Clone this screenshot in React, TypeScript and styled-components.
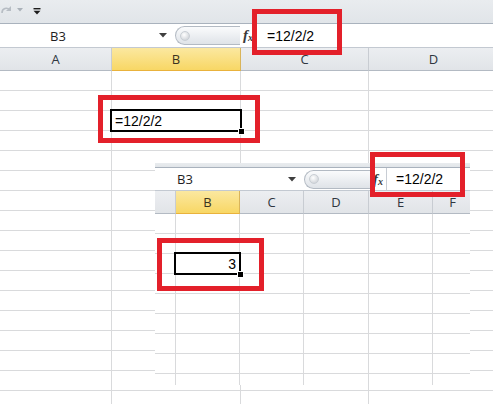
import { FC } from "react";
import styled, { createGlobalStyle } from "styled-components";

interface Column {
  label: string;
  width: number;
  selected?: boolean;
}

interface SheetProps {
  columns: Column[];
  rows: number;
  activeRow: number;
  activeCol: number;
  cellText: string;
  cellAlign: "left" | "right";
  nameText: string;
  nameWidth: number;
  nameIndent: number;
  splitterWidth: number;
  formula: string;
  formulaIndent: number;
  ribbonHeight: number;
  formulaHeight: number;
  quickAccess?: boolean;
}

const GlobalStyle = createGlobalStyle`
  html, body {
    margin: 0;
    padding: 0;
    background: #ffffff;
  }
`;

const QuickAccess: FC = () => (
  <QuickBar>
    <svg width="12" height="12" viewBox="0 0 12 12">
      <path d="M1 9 C1 4 6 3 9 6" fill="none" stroke="#b7bdc4" strokeWidth="1.6" />
      <path d="M10 2 L10 7 L5 7 Z" fill="#b7bdc4" />
    </svg>
    <svg width="6" height="4" viewBox="0 0 6 4">
      <path d="M0 0 L6 0 L3 3.5 Z" fill="#aab1b9" />
    </svg>
    <Spacer />
    <svg width="8" height="7" viewBox="0 0 8 7">
      <rect x="0.5" y="0" width="7" height="1.4" fill="#1c1c1c" />
      <path d="M0.5 2.8 L7.5 2.8 L4 6.5 Z" fill="#1c1c1c" />
    </svg>
  </QuickBar>
);

const Sheet: FC<SheetProps> = (p) => (
  <SheetFrame>
    <Ribbon $height={p.ribbonHeight}>{p.quickAccess && <QuickAccess />}</Ribbon>
    <FormulaRow $height={p.formulaHeight}>
      <NameBox $width={p.nameWidth} $indent={p.nameIndent}>
        <span>{p.nameText}</span>
        <svg width="8" height="5" viewBox="0 0 8 5">
          <path d="M0 0 L8 0 L4 4.5 Z" fill="#3f3f3f" />
        </svg>
      </NameBox>
      <Splitter $width={p.splitterWidth}>
        <Pill>
          <Grip />
        </Pill>
        <Fx>
          f<sub>x</sub>
        </Fx>
      </Splitter>
      <FormulaInput $indent={p.formulaIndent}>{p.formula}</FormulaInput>
    </FormulaRow>
    <HeaderRow>
      {p.columns.map((c, i) => (
        <HeaderCell key={i} $width={c.width} $selected={!!c.selected}>
          {c.label}
        </HeaderCell>
      ))}
    </HeaderRow>
    {Array.from({ length: p.rows }, (_, r) => (
      <Row key={r}>
        {p.columns.map((c, i) => {
          const active = r + 1 === p.activeRow && i === p.activeCol;
          return (
            <Cell key={i} $width={c.width} $active={active} $align={p.cellAlign}>
              {active && (
                <>
                  {p.cellText}
                  <Selection>
                    <FillHandle />
                  </Selection>
                </>
              )}
            </Cell>
          );
        })}
      </Row>
    ))}
  </SheetFrame>
);

export default function App() {
  return (
    <>
      <GlobalStyle />
      <Page>
        <Sheet
          columns={[
            { label: "A", width: 112 },
            { label: "B", width: 129, selected: true },
            { label: "C", width: 128 },
            { label: "D", width: 130 },
          ]}
          rows={17}
          activeRow={3}
          activeCol={1}
          cellText="=12/2/2"
          cellAlign="left"
          nameText="B3"
          nameWidth={173}
          nameIndent={50}
          splitterWidth={83}
          formula="=12/2/2"
          formulaIndent={10}
          ribbonHeight={23}
          formulaHeight={23}
          quickAccess
        />
        <Inset>
          <Sheet
            columns={[
              { label: "", width: 21 },
              { label: "B", width: 64, selected: true },
              { label: "C", width: 64 },
              { label: "D", width: 65 },
              { label: "E", width: 64 },
              { label: "F", width: 40 },
            ]}
            rows={9}
            activeRow={3}
            activeCol={1}
            cellText="3"
            cellAlign="right"
            nameText="B3"
            nameWidth={147}
            nameIndent={22}
            splitterWidth={84}
            formula="=12/2/2"
            formulaIndent={9}
            ribbonHeight={4}
            formulaHeight={22}
          />
        </Inset>
        <RedBox $x={252} $y={9} $w={90} $h={46} />
        <RedBox $x={98} $y={95} $w={162} $h={48} />
        <RedBox $x={370} $y={152} $w={95} $h={45} />
        <RedBox $x={157} $y={238} $w={107} $h={53} />
      </Page>
    </>
  );
}

const Page = styled.div`
  position: relative;
  width: 493px;
  height: 404px;
  overflow: hidden;
  background: #ffffff;
`;

const SheetFrame = styled.div`
  display: flex;
  flex-direction: column;
  background: #ffffff;
  font-family: "Liberation Sans", Arial, sans-serif;
`;

const Ribbon = styled.div<{ $height: number }>`
  height: ${(p) => p.$height}px;
  flex-shrink: 0;
  background: linear-gradient(#e9ecef, #e1e5e9);
  border-bottom: 1px solid #a9b2bd;
`;

const QuickBar = styled.div`
  display: flex;
  align-items: center;
  gap: 4px;
  height: 100%;
  padding-left: 1px;
  margin-top: -2px;

  svg:last-child {
    margin-top: 3px;
  }
`;

const Spacer = styled.div`
  width: 2px;
`;

const FormulaRow = styled.div<{ $height: number }>`
  display: flex;
  height: ${(p) => p.$height}px;
  flex-shrink: 0;
  background: #ffffff;
  border-bottom: 1px solid #c3c9d1;
`;

const NameBox = styled.div<{ $width: number; $indent: number }>`
  display: flex;
  align-items: center;
  width: ${(p) => p.$width}px;
  flex-shrink: 0;
  box-sizing: border-box;
  padding-left: ${(p) => p.$indent}px;
  padding-right: 6px;
  font-family: "Open Sans", "Liberation Sans", sans-serif;
  font-size: 13px;
  color: #1e1e1e;

  svg {
    margin-left: auto;
  }
`;

const Splitter = styled.div<{ $width: number }>`
  display: flex;
  align-items: center;
  width: ${(p) => p.$width}px;
  flex-shrink: 0;
  box-sizing: border-box;
  padding-left: 2px;
  padding-right: 3px;
`;

const Pill = styled.div`
  display: flex;
  align-items: center;
  flex: 1;
  height: 17px;
  border: 1px solid #b3bac3;
  border-right: none;
  border-radius: 10px 0 0 10px;
  background: linear-gradient(#fafbfc, #dfe3e8);
`;

const Grip = styled.div`
  width: 8px;
  height: 8px;
  margin-left: 4px;
  border-radius: 50%;
  background: radial-gradient(circle at 40% 35%, #ffffff, #c4c9cf);
  border: 1px solid #c9ced4;
`;

const Fx = styled.div`
  font-family: "Liberation Serif", "Times New Roman", serif;
  font-style: italic;
  font-weight: bold;
  font-size: 15px;
  color: #3a3a3a;
  margin-left: 3px;
  line-height: 1;

  sub {
    font-size: 10px;
    vertical-align: -1px;
  }
`;

const FormulaInput = styled.div<{ $indent: number }>`
  display: flex;
  align-items: center;
  flex: 1;
  padding-left: ${(p) => p.$indent}px;
  border-left: 1px solid #c8cdd4;
  font-size: 14px;
  color: #000000;
  white-space: nowrap;
`;

const HeaderRow = styled.div`
  display: flex;
  height: 23px;
  flex-shrink: 0;
`;

const HeaderCell = styled.div<{ $width: number; $selected: boolean }>`
  display: flex;
  align-items: center;
  justify-content: center;
  width: ${(p) => p.$width}px;
  flex-shrink: 0;
  box-sizing: border-box;
  font-family: "Open Sans", "Liberation Sans", sans-serif;
  font-size: 13px;
  color: ${(p) => (p.$selected ? "#3a3320" : "#2f3640")};
  background: ${(p) =>
    p.$selected
      ? "linear-gradient(#fbe8a0, #f8d765)"
      : "linear-gradient(#eceef1, #e1e4e8)"};
  border-right: 1px solid ${(p) => (p.$selected ? "#d9b45a" : "#c8ccd2")};
  border-bottom: 1px solid ${(p) => (p.$selected ? "#e9b23c" : "#b3bac3")};
`;

const Row = styled.div`
  display: flex;
  height: 20px;
  flex-shrink: 0;
`;

const Cell = styled.div<{ $width: number; $active: boolean; $align: "left" | "right" }>`
  position: relative;
  z-index: ${(p) => (p.$active ? 1 : 0)};
  display: flex;
  align-items: center;
  justify-content: ${(p) => (p.$align === "right" ? "flex-end" : "flex-start")};
  width: ${(p) => p.$width}px;
  flex-shrink: 0;
  box-sizing: border-box;
  padding: 0 3px;
  border-right: 1px solid #d9dadc;
  border-bottom: 1px solid #d9dadc;
  font-size: 14px;
  color: #000000;
  white-space: nowrap;
`;

const Selection = styled.div`
  position: absolute;
  inset: -2px;
  border: 2px solid #000000;
  pointer-events: none;
`;

const FillHandle = styled.div`
  position: absolute;
  right: -5px;
  bottom: -5px;
  width: 5px;
  height: 5px;
  background: #000000;
  border: 1px solid #ffffff;
`;

const Inset = styled.div`
  position: absolute;
  left: 155px;
  top: 163px;
  width: 315px;
  height: 222px;
  overflow: hidden;
  background: #ffffff;
`;

const RedBox = styled.div<{ $x: number; $y: number; $w: number; $h: number }>`
  position: absolute;
  left: ${(p) => p.$x}px;
  top: ${(p) => p.$y}px;
  width: ${(p) => p.$w}px;
  height: ${(p) => p.$h}px;
  box-sizing: border-box;
  border: 5px solid #e3202a;
`;
